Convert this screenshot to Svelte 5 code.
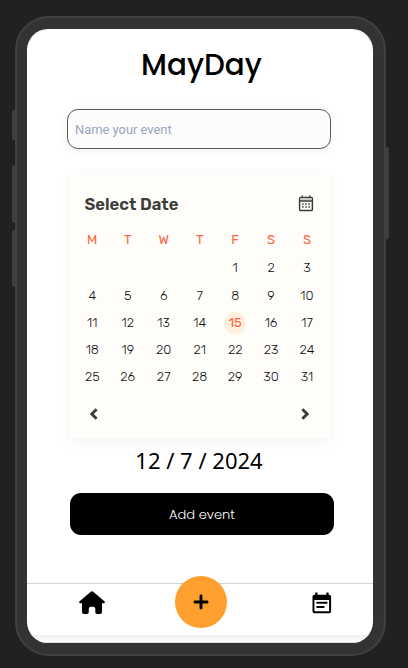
<script>
  const weekdays = ['M', 'T', 'W', 'T', 'F', 'S', 'S'];
  const days = [...Array(4).fill(null), ...Array.from({ length: 31 }, (_, i) => i + 1)];
  const selected = 15;
</script>

<div class="page">
  <div class="keys left"><i class="k1"></i><i class="k2"></i><i class="k3"></i></div>
  <div class="phone">
    <main class="screen">
      <h1><span>MayDay</span></h1>
      <input class="name" placeholder="Name your event" aria-label="Name your event" />

      <section class="card">
        <header>
          <h2>Select Date</h2>
          <svg width="16" height="17" viewBox="0 0 16 17">
            <rect x="1.6" y="2.6" width="12.8" height="13" rx="1.2" fill="none" stroke="#3d3c3c" stroke-width="1.5" />
            <rect x="2.3" y="3.3" width="11.4" height="2.2" fill="#c8c8c6" />
            <path d="M2 6h12M4.2 .5v2.6M11.8 .5v2.6" stroke="#3d3c3c" stroke-width="1.4" />
            {#each [4.9, 8, 11.1] as x}
              {#each [9, 12] as y}
                <rect x={x - 0.75} y={y - 0.75} width="1.5" height="1.5" fill="#3d3c3c" />
              {/each}
            {/each}
          </svg>
        </header>
        <div class="grid">
          {#each weekdays as d}<span class="wd">{d}</span>{/each}
          {#each days as d}<span class="day" class:selected={d === selected}><b>{d ?? ''}</b></span>{/each}
        </div>
        <div class="arrows">
          <svg width="10" height="12" viewBox="0 0 10 12"><path d="M7.6 1.2 2.8 6l4.8 4.8" /></svg>
          <svg width="10" height="12" viewBox="0 0 10 12"><path d="M2.4 1.2 7.2 6l-4.8 4.8" /></svg>
        </div>
      </section>

      <p class="date">12 / 7 / 2024</p>
      <button class="add">Add event</button>

      <nav>
        <svg class="home" width="26" height="24" viewBox="0 0 26 24">
          <path d="M12.1.5Q13 0 13.9.5L25.4 10.3Q26.4 11.4 25.3 12.2H23V21Q23 23 21 23H18.2Q16.3 23 16.3 21V17.8Q16.3 15.8 14.3 15.8H11.8Q9.8 15.8 9.8 17.8V21Q9.8 23 7.9 23H5Q3 23 3 21V12.2H.8Q-.4 11.4.6 10.3Z" />
        </svg>
        <div class="plus">
          <svg width="16" height="16" viewBox="0 0 16 16"><path d="M8 2v12M2 8h12" stroke="#000" stroke-width="2.9" stroke-linecap="round" /></svg>
        </div>
        <svg class="events" width="20" height="22" viewBox="0 0 20 22">
          <path fill-rule="evenodd" d="M3.2.4h2.3v2.4h8.8V.4h2.3v2.4h.5q2 0 2 2v14.4q0 2-2 2H2.5q-2 0-2-2V4.8q0-2 2-2h.7ZM2.4 8v11.2h14.7V8Z" />
          <path d="M4.4 9.8h11v2h-11zM4.4 13.9h8v2h-8z" />
        </svg>
      </nav>
      <div class="shade"></div>
    </main>
  </div>
  <div class="keys right"><i class="k4"></i></div>
</div>

<style>
  :global(body) { margin: 0; background: #212121; }
  * { box-sizing: border-box; }
  .page { width: 408px; height: 668px; display: flex; background: #212121; padding-top: 16px; overflow: hidden; }
  .keys { display: flex; flex-direction: column; flex: none; }
  .keys i { width: 3px; background: #3d3d3d; }
  .left { width: 15px; padding-top: 94px; align-items: flex-end; }
  .left i { border-radius: 2px 0 0 2px; }
  .k1 { height: 30px; }
  .k2 { height: 58px; margin-top: 25px; }
  .k3 { height: 57px; margin-top: 7px; }
  .right { padding-top: 131px; }
  .right i { border-radius: 0 2px 2px 0; }
  .k4 { height: 92px; }
  .phone { flex: none; width: 371px; height: 640px; border: 2px solid #404040; border-radius: 34px; background: #333; padding: 10.6px 11.4px 11.3px 10.4px; }
  .screen { height: 100%; background: #fff; border-radius: 21px; overflow: hidden; display: flex; flex-direction: column; }
  h1 { margin: 16.4px 0 0; height: 40px; line-height: 40px; text-align: center; padding-left: 3px; font-family: Poppins, "Open Sans", sans-serif; font-weight: 500; font-size: 29.4px; color: #000; }
  h1 span { display: inline-block; }
  .name { margin: 24px 0 0 39.6px; width: 264px; height: 40px; border: 1px solid #5c5c5c; border-radius: 11px; background: #fcfcfc; padding: 1px 7px 0; font-family: Roboto, sans-serif; font-size: 12.9px; color: #333; box-shadow: 0 1px 10px rgba(0, 0, 0, .06); flex: none; outline: 0; }
  .name::placeholder { color: #98a6bf; opacity: 1; }
  .card { margin: 25px 0 0 42.6px; width: 260px; height: 264px; flex: none; background: #fffdf9; box-shadow: 0 3px 12px rgba(30, 30, 60, .06); font-family: Rubik, Roboto, sans-serif; }
  header { height: 52px; display: flex; justify-content: space-between; align-items: center; padding: 7px 16.2px 0 14.5px; }
  h2 { margin: 1px 0 0; font-size: 16.6px; line-height: 20px; font-weight: 600; color: #3d3c3c; }
  .grid { display: grid; grid-template-columns: 36px 35px 36.8px 35.2px 35.8px 36px 35.8px; grid-template-rows: 28px 28px 27.5px 27px 27px 27px; margin-left: 4.3px; }
  .grid span { display: flex; align-items: center; justify-content: center; font-size: 13px; }
  .wd { color: #fb6540; }
  .day { color: #111; }
  .day b { font-weight: 300; }
  .day.selected b { width: 22px; height: 22px; line-height: 22px; border-radius: 50%; text-align: center; background: #fff0de; color: #fb6540; font-weight: 400; }
  .arrows { display: flex; justify-content: space-between; padding: 17.6px 19.7px 0 18.8px; }
  .arrows path { fill: none; stroke: #3d3c3c; stroke-width: 2.9; }
  .date { margin: 5px 0 0; height: 34px; line-height: 34px; text-align: center; padding-right: 2px; font-family: "Noto Sans", sans-serif; font-size: 22px; color: #000; }
  .add { margin: 16px 0 0 42.6px; width: 264px; height: 42px; flex: none; border: 0; border-radius: 11px; background: #000; color: #fff; font: 300 13px Poppins, "Open Sans", sans-serif; padding: 2px 0 0; }
  nav { margin-top: 48px; height: 52px; flex: none; border-top: 1px solid #d3d3d3; display: flex; align-items: flex-start; }
  .home { margin: 7.5px 0 0 51.5px; }
  .plus { width: 52px; height: 52px; margin: -8px 0 0 70.4px; border-radius: 50%; background: #ff9f2d; display: flex; align-items: center; justify-content: center; }
  .events { margin: 7.8px 0 0 84.4px; }
  .shade { flex: 1; background: linear-gradient(#eeeeee, #fff 90%); border-bottom: 1px solid #ddd; }
</style>
